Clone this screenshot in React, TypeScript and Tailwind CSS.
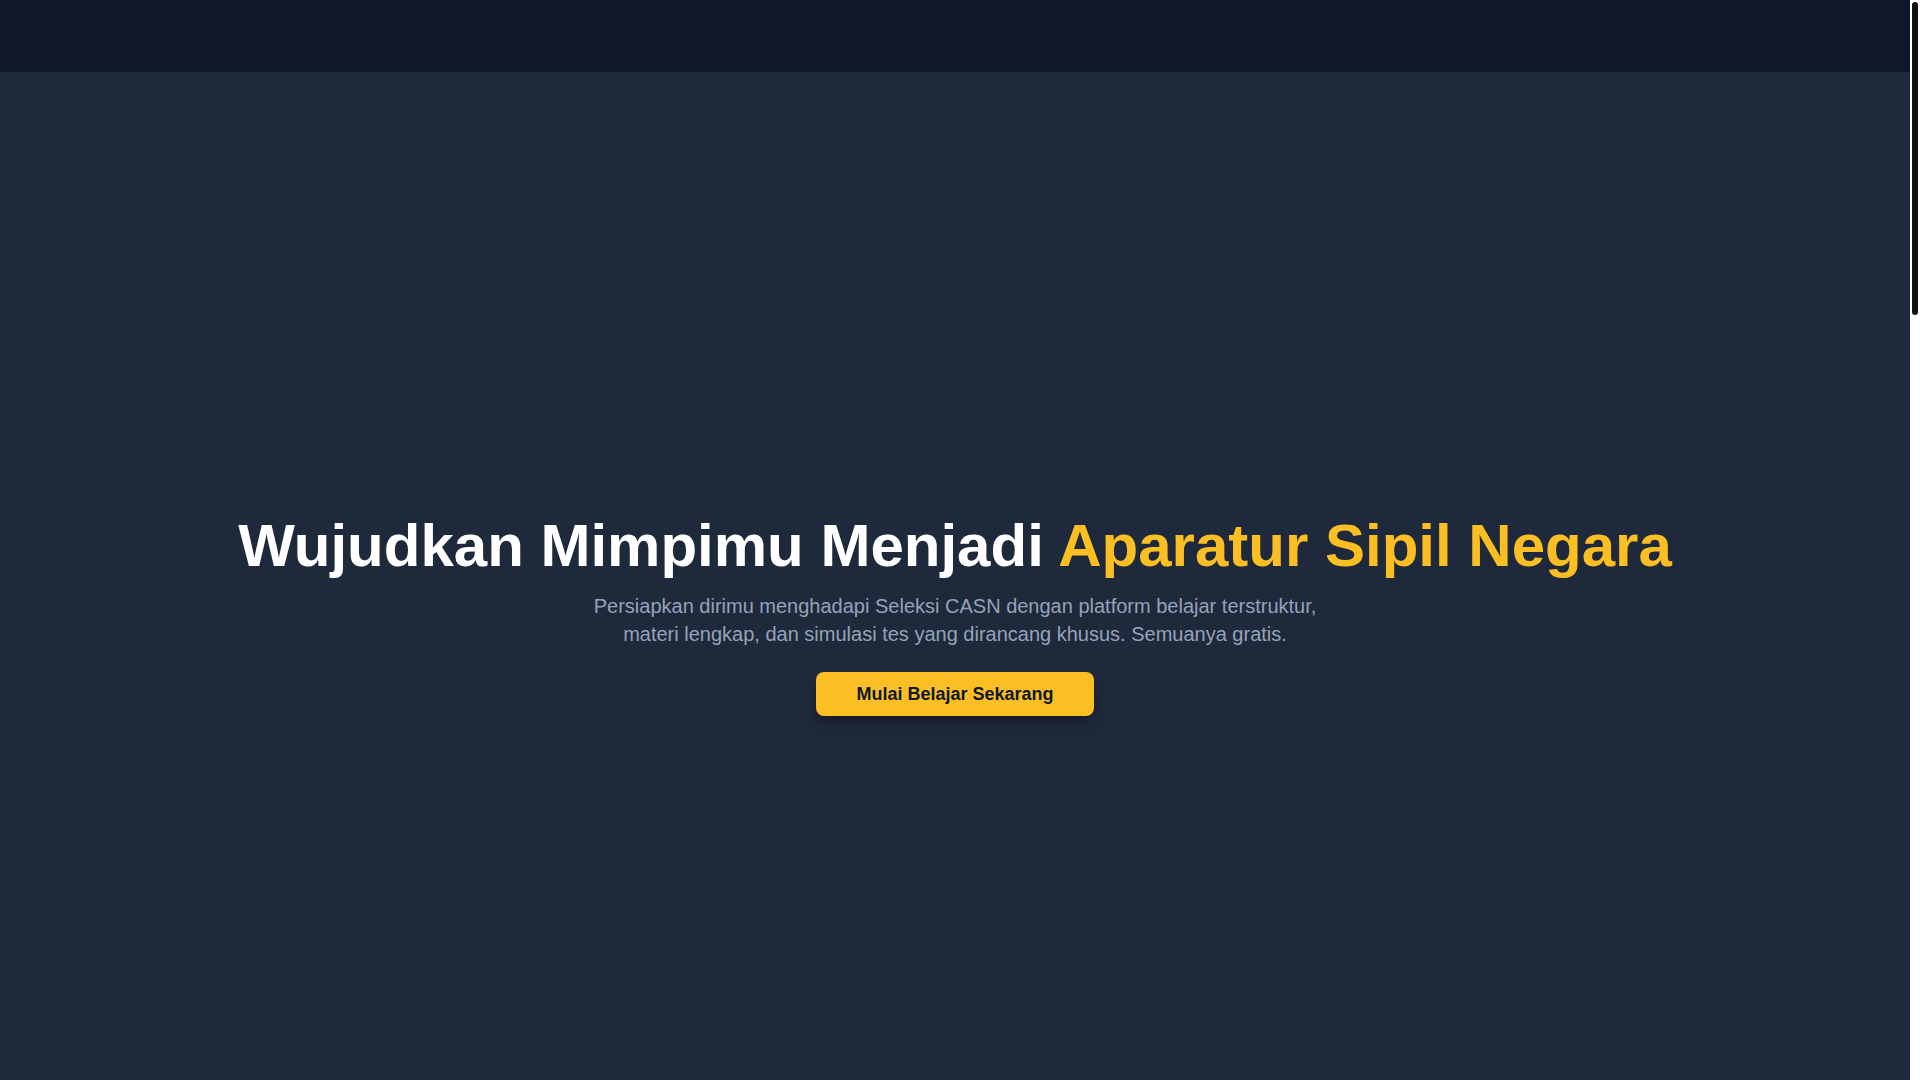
export default function App() {
  return (
    <div
      className="min-h-screen bg-[#1e293b] pr-[10px] text-white"
      style={{ fontFamily: '"Liberation Sans", Arial, sans-serif' }}
    >
      <header className="h-[72px] bg-[#0f172a]" />

      <section className="flex min-h-screen flex-col items-center justify-center px-6 pt-2 text-center">
        <h1 className="text-6xl font-bold leading-none">
          Wujudkan Mimpimu Menjadi <span className="text-[#fbbf24]">Aparatur Sipil Negara</span>
        </h1>
        <p className="mt-4 max-w-3xl text-xl text-[#94a3b8]">
          Persiapkan dirimu menghadapi Seleksi CASN dengan platform belajar terstruktur, materi
          lengkap, dan simulasi tes yang dirancang khusus. Semuanya gratis.
        </p>
        <button className="mt-6 rounded-lg bg-[#fbbf24] px-10 py-2 text-lg font-bold text-[#0f172a] shadow-lg shadow-black/25">
          Mulai Belajar Sekarang
        </button>
      </section>

      {/* sections below the fold */}
      <section className="h-[1600px]" />

      {/* browser scrollbar as seen in the capture */}
      <div className="fixed top-0 right-0 h-screen w-[10px] bg-white px-[2px] pt-[2px]">
        <div className="h-[313px] rounded-full bg-[#111]" />
      </div>
    </div>
  );
}
